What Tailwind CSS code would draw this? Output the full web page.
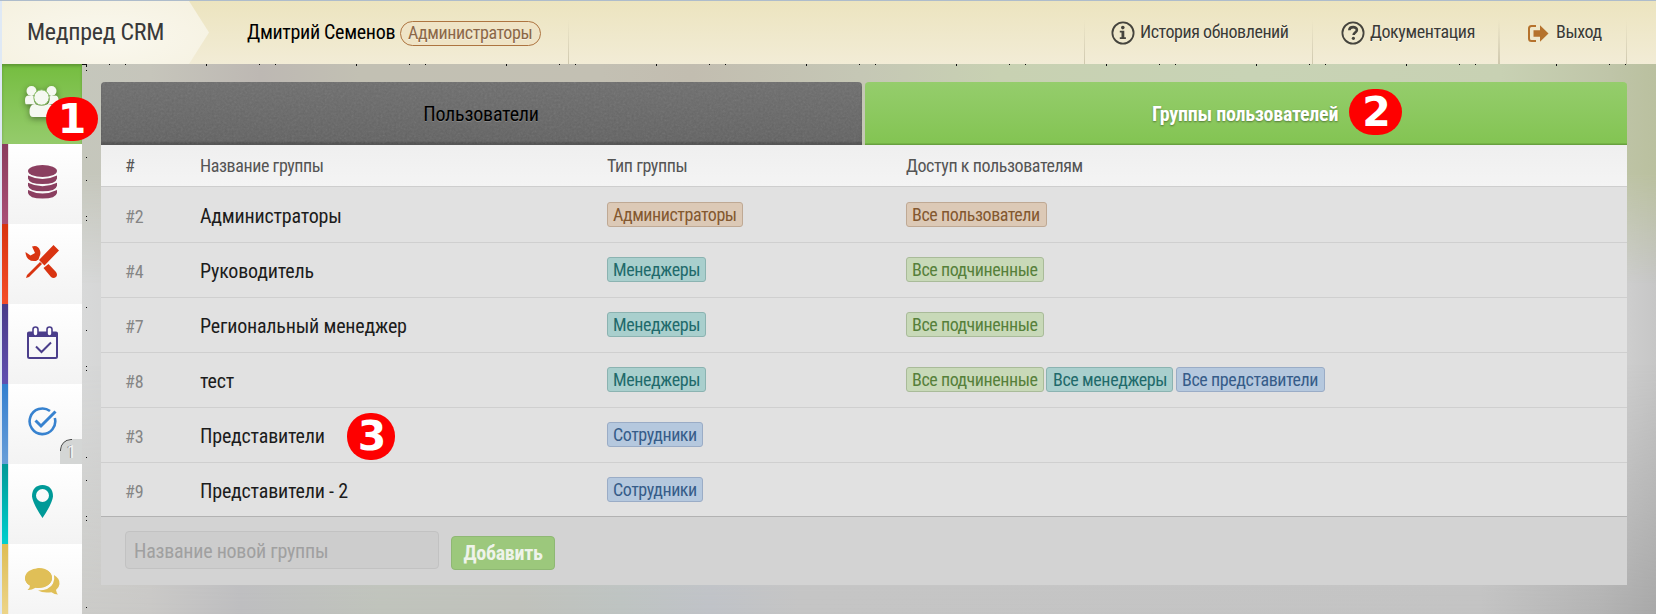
<!DOCTYPE html>
<html lang="ru">
<head>
<meta charset="utf-8">
<title>Медпред CRM</title>
<script src="https://cdn.jsdelivr.net/npm/@tailwindcss/browser@4"></script>
</head>
<body class="relative isolate h-[614px] w-[1656px] overflow-hidden bg-[#cfd0cf] font-['Roboto_Condensed',Roboto,sans-serif] text-[18px] text-black">

<!-- blurred backdrop -->
<div class="absolute inset-0 -z-10 bg-[linear-gradient(to_right,#d8d9d9_80px,#d0d0d0_160px,#cccccc_1540px,#cdcdcd_1630px,#c6c6c6_1656px)]"></div>
<div class="absolute inset-x-0 bottom-0 -z-10 h-[250px] bg-[linear-gradient(to_right,#cbcbc8_80px,#c9c8c6_150px,#bdbdbf_240px,#bfc3bb_380px,#bfc1bb_520px,#bdc3c1_620px,#bfc2c7_710px,#c4c4c4_800px,#c3c3c3_1480px,#b3b3b3_1600px,#a8a8a8_1656px)] [mask-image:linear-gradient(to_bottom,transparent,black)]"></div>
<div class="absolute inset-x-0 top-[64px] -z-10 h-[220px] bg-[linear-gradient(to_right,#c5c7bc_80px,#c6c5bb_150px,#bdb8b3_260px,#c2c0b3_360px,#c3c0b3_600px,#c2bdb0_690px,#c5c7b5_860px,#c8d1b2_1000px,#c8d3b5_1250px,#c8d1b3_1500px,#bfc5a8_1610px,#bac09f_1656px)] [mask-image:linear-gradient(to_bottom,black_20%,black_50%,transparent)]"></div>

<!-- header -->
<header class="flex h-[64px] border-t border-[#aebccb] bg-linear-to-b from-[#ece4bf] to-[#f2ecd6] text-[#3a3a35]">
  <div class="w-[2px] shrink-0 bg-[#dfe9f5]"></div>
  <div class="flex w-[207px] shrink-0 items-center bg-[radial-gradient(ellipse_at_50%_60%,#faf8ee,#f5f1e0)] pb-[2px] pl-[25px] text-[24px] tracking-[-0.3px] text-[#393939] [clip-path:polygon(0_0,187px_0,100%_50%,187px_100%,0_100%)]"><span class="whitespace-nowrap">Медпред CRM</span></div>
  <div class="flex items-center pl-[38px]">
    <span class="mb-[2px] w-[153px] whitespace-nowrap text-[20px] tracking-[-0.32px] text-black">Дмитрий Семенов</span>
    <span class="mt-[1px] flex h-[25px] w-[141px] items-center rounded-full border border-[#ad7440] bg-[#efe4c6] pb-px pl-[7px] tracking-[-0.4px] text-[#8b6747] text-shadow-[0_1px_0_#ffffff80]">Администраторы</span>
  </div>
  <div class="ml-[27px] w-px self-stretch bg-linear-to-b from-transparent from-30% to-[#cfc8ad]"></div>
  <nav class="ml-auto mr-[29px] flex items-center tracking-[-0.4px] text-shadow-[0_1px_0_#ffffffa0]">
    <span class="h-full w-px bg-linear-to-b from-transparent from-30% to-[#cfc8ad]"></span>
    <a class="flex h-full w-[227px] items-center pb-[2px] pl-[26px]">
      <svg class="mr-[5px] mt-[2px] size-[24px]" viewBox="0 0 24 24" fill="none" stroke="#45443d"><circle cx="12" cy="12" r="10.6" stroke-width="1.8"/><g fill="#45443d" stroke="none"><circle cx="11.8" cy="6.6" r="1.8"/><path d="M8.8 9.8h4.5v6.4h1.6v1.7H8.8v-1.7h1.7v-4.7H8.8z"/></g></svg>
      <span class="whitespace-nowrap tracking-[-0.45px]">История обновлений</span>
    </a>
    <span class="h-full w-px bg-linear-to-b from-transparent from-30% to-[#cfc8ad]"></span>
    <a class="flex h-full w-[185px] items-center pb-[2px] pl-[28px]">
      <svg class="mr-[5px] mt-[2px] size-[24px]" viewBox="0 0 24 24" fill="none" stroke="#45443d"><circle cx="12" cy="12" r="10.6" stroke-width="1.8"/><path d="M8.3 9.2c.2-4 7.6-4 7.6-.3 0 2.5-3.3 2.6-3.3 5" stroke-width="2.6"/><circle cx="12.4" cy="17.3" r="1.6" fill="#45443d" stroke="none"/></svg>
      <span class="whitespace-nowrap">Документация</span>
    </a>
    <span class="h-full w-[2px] bg-linear-to-b from-transparent from-30% to-[#cfc8ad]"></span>
    <a class="flex h-full w-[126px] items-center pb-[2px] pl-[28px]">
      <svg class="mr-[7px] mt-[3px] h-[17px] w-[21px]" viewBox="0 0 21 17"><path d="M8 1H3.5Q1 1 1 3.500v10Q1 16 3.500 16H8" fill="none" stroke="#b5722c" stroke-width="2"/><path d="M5.500 5.300h6.500V.3l8.500 8.200-8.500 8.200v-5H5.500z" fill="#b5722c"/></svg>
      <span>Выход</span>
    </a>
    <span class="h-full w-px bg-linear-to-b from-transparent from-30% to-[#cfc8ad]"></span>
  </nav>
</header>

<!-- speckles along the header and the sidebar -->
<div class="absolute inset-x-0 left-[82px] top-[64px] h-px bg-[repeating-linear-gradient(to_right,transparent_0_27px,#111_27px_28px,transparent_28px_43px,#111_43px_44px,transparent_44px_124px,#111_124px_125px,transparent_125px_150px)]"></div>
<div class="absolute inset-x-0 left-[82px] top-[65px] h-px bg-[repeating-linear-gradient(to_right,transparent_0_124px,#111_124px_125px,transparent_125px_150px)]"></div>
<div class="absolute left-[82px] top-[64px] h-[3px] w-[5px] border-r border-t border-[#111]"></div>
<div class="absolute bottom-0 left-[86px] top-[64px] w-px bg-[repeating-linear-gradient(to_bottom,transparent_0_2px,#111_2px_3px,transparent_3px_6px,#111_6px_7px,transparent_7px_93px,#111_93px_94px,transparent_94px_116px,#111_116px_117px,transparent_117px_150px)]"></div>

<div class="flex h-[550px]">
  <!-- sidebar -->
  <aside class="flex w-[82px] shrink-0 flex-col border-l-2 border-[#dfe9f5]">
    <a class="flex h-[80px] shrink-0 items-center justify-center bg-linear-to-b from-[#75bd3f] to-[#95cb6b] shadow-[inset_0_2px_3px_#0003]">
      <svg class="mb-[5px] h-[33px] w-[36px] drop-shadow-[0_2px_3px_#0006]" viewBox="0 0 36 33" fill="#f5f8f1"><circle cx="7.500" cy="6" r="5"/><circle cx="27.500" cy="6" r="5"/><path d="M1 15q0-4.500 3.500-4.500l6 .8q-1.500 5 1.500 8H2Q1 19 1 15zM34.500 15q0-4.500-3.500-4.500l-6 .8q1.500 5-1.500 8h10q1 0 1-4.300z"/><circle cx="17.500" cy="12.500" r="7.700" stroke="#7fb95a"/><path d="M5.500 27q0-8 5.500-8 6.500 3.500 13 0 5.800 0 5.800 8 0 5-3.300 5H9q-3.500 0-3.500-5z"/></svg>
    </a>
    <a class="flex h-[80px] shrink-0 bg-linear-to-b from-white to-[#f3f3f3]">
      <span class="w-[6px] bg-linear-to-b from-[#8a3d5e] to-[#a94f76]"></span><span class="w-px bg-[#e9e2e6]"></span>
      <span class="flex grow items-center justify-center"><svg class="mb-[5px] mr-[7px] h-[34px] w-[29px]" viewBox="0 0 29 34" fill="#8b3f60"><ellipse cx="14.500" cy="6" rx="14.500" ry="6"/><path d="M0 10.500q14.500 7 29 0v3Q28 19 14.500 19T0 13.500zM0 17.700q14.500 7 29 0v3q-1 5.500-14.500 5.500T0 20.700zM0 25q14.500 7 29 0v3q-1 5.500-14.500 5.500T0 28z"/></svg></span>
    </a>
    <a class="flex h-[80px] shrink-0 bg-linear-to-b from-white to-[#f3f3f3]">
      <span class="w-[6px] bg-linear-to-b from-[#d8330e] to-[#f44d28]"></span><span class="w-px bg-[#f0e4e2]"></span>
      <span class="flex grow items-center justify-center"><svg class="mb-[4px] mr-[7px] size-[34px]" viewBox="0 0 34 34" fill="#d93411"><path d="M28.500 0 34 5.500 19.500 20.500 14 15zM1 33l1-3 13-13 2 2L4 32zM18.500 23l5-4 7.500 8q2 3 0 5-2.500 2-5 0z"/><path d="M7 1.500Q13-.5 15 5.500q1 3-.5 6l-1 3-2.500 1.500Q1 17 .5 7l5 3.500L10 8z"/></svg></span>
    </a>
    <a class="flex h-[80px] shrink-0 bg-linear-to-b from-white to-[#f3f3f3]">
      <span class="w-[6px] bg-linear-to-b from-[#493c88] to-[#604fb0]"></span><span class="w-px bg-[#e5e3ec]"></span>
      <span class="flex grow items-center justify-center"><svg class="mb-[4px] mr-[7px] h-[33px] w-[31px]" viewBox="0 0 31 33"><path d="M2 5.500h27q2 0 2 2V11H0V7.500q0-2 2-2z" fill="#4b3e8b"/><rect x="1" y="7" width="29" height="25" rx="1.500" fill="none" stroke="#4b3e8b" stroke-width="2"/><rect x="6" y="1" width="5" height="9" rx="2.500" fill="#fff" stroke="#4b3e8b" stroke-width="1.600"/><rect x="20" y="1" width="5" height="9" rx="2.500" fill="#fff" stroke="#4b3e8b" stroke-width="1.600"/><path d="m9 20.500 5.500 5.500L24 16.500" fill="none" stroke="#4b3e8b" stroke-width="2"/></svg></span>
    </a>
    <a class="relative flex h-[80px] shrink-0 bg-linear-to-b from-white to-[#f3f3f3]">
      <span class="w-[6px] bg-linear-to-b from-[#327fcf] to-[#689ed8]"></span><span class="w-px bg-[#e2e9f0]"></span>
      <span class="flex grow items-center justify-center"><svg class="mb-[5px] mr-[7px] h-[29px] w-[29px]" viewBox="0 0 29 29" fill="none" stroke="#3782cf" stroke-width="2.600"><path d="M22 4A12.800 12.800 0 1 0 26.800 11"/><path d="m7.500 13.500 5.500 5.500L27.500 4.500" stroke-width="3"/></svg></span>
      <span class="absolute bottom-0 right-0 flex h-[25px] w-[22px] items-center justify-center overflow-hidden rounded-tl-[11px] bg-[#d4d6d5] pl-px text-[18px] text-[#f4f4f4] text-shadow-[-1px_0_0_#888]">
        <svg class="absolute left-0 top-0 size-[12px]" viewBox="0 0 12 12" fill="none" stroke="#444"><path d="M.5 12v-1A10.500 10.500 0 0 1 11 .5h1"/></svg>1</span>
    </a>
    <a class="flex h-[80px] shrink-0 bg-linear-to-b from-white to-[#f3f3f3]">
      <span class="w-[6px] bg-linear-to-b from-[#009997] to-[#00cfce]"></span><span class="w-px bg-[#e0ecec]"></span>
      <span class="flex grow items-center justify-center"><svg class="mb-[5px] mr-[7px] h-[33px] w-[21px]" viewBox="0 0 21 33" fill="#009a98"><path fill-rule="evenodd" d="M10.500 0Q21 .5 21 11.500 20 19 10.500 33 1 19 0 11.500 0 .5 10.500 0zm0 4a6.500 6.500 0 1 0 0 13 6.500 6.500 0 0 0 0-13z"/></svg></span>
    </a>
    <a class="flex h-[80px] shrink-0 bg-linear-to-b from-white to-[#f3f3f3]">
      <span class="w-[6px] bg-linear-to-b from-[#debd54] to-[#efd88f]"></span><span class="w-px bg-[#efece0]"></span>
      <span class="flex grow items-center justify-center"><svg class="mb-[5px] mr-[6px] h-[27px] w-[35px]" viewBox="0 0 35 27" fill="#e0bf57"><path d="M13.500 0C22 0 27 4.500 27 10s-5.500 10-13.500 10q-1.500 0-3-.3Q6 22.500 2.500 22q2.500-2 2.500-4.500Q0 14.500 0 10 0 4.500 13.500 0z"/><ellipse cx="13.500" cy="10" rx="13.500" ry="9.800"/><path d="M29 7q6 3.500 5.500 9-.3 3.500-3.500 6 .5 3 2 4.500-3.500 0-6.500-2.300Q18 25.500 13 22.500 25 22 28 15.500q2-4 1-8.500z"/></svg></span>
    </a>
  </aside>

  <!-- content -->
  <main class="ml-[19px] mt-[18px] w-[1526px] shrink-0">
    <div class="flex h-[63px] gap-[3px]">
      <div class="relative flex w-[761px] items-center justify-center overflow-hidden rounded-t-[4px] border-b border-[#565656] bg-linear-to-b from-[#6e6e6e] to-[#626262] pt-[2px] text-[20px] tracking-[-0.2px] text-black shadow-[inset_0_-2px_2px_#0003]">
        <svg class="absolute inset-0 size-full opacity-15"><filter id="grain"><feTurbulence type="fractalNoise" baseFrequency=".45" numOctaves="2"/><feColorMatrix type="saturate" values="0"/></filter><rect width="100%" height="100%" filter="url(#grain)"/></svg>
        <span class="relative mr-px text-shadow-[0_1px_0_#ffffff30]">Пользователи</span>
      </div>
      <div class="flex w-[762px] items-center rounded-t-[4px] border-b border-[#68a03f] bg-linear-to-b from-[#95cd6c] to-[#83c452] pl-[287px] pt-[2px] text-[20px] font-bold tracking-[-0.27px] text-white shadow-[inset_0_-1px_0_#76b348] text-shadow-[0_1px_2px_#0006]">Группы пользователей</div>
    </div>

    <div class="grid h-[42px] grid-cols-[75px_407px_299px_1fr] items-center border-b border-[#cecece] bg-linear-to-b from-[#efefef] to-[#f4f4f4] pl-[24px] tracking-[-0.42px] text-[#555]">
      <span>#</span><span>Название группы</span><span>Тип группы</span><span>Доступ к пользователям</span>
    </div>

    <div class="grid h-[56px] grid-cols-[75px_407px_299px_1fr] items-start border-b border-[#cfcfcf] bg-[#e1e1e1] pl-[24px] pt-[15px]">
      <span class="leading-[29px] text-[#858585]">#2</span><span class="text-[20px] leading-[28px] tracking-[-0.2px] text-[#1c1c1c]">Администраторы</span>
      <span class="flex"><b class="h-[25px] w-[136px] whitespace-nowrap rounded-[3px] border border-[#bfa994] bg-[#dcc9b6] pl-[5px] font-normal leading-[24px] tracking-[-0.45px] text-[#83582f]">Администраторы</b></span>
      <span class="flex"><b class="h-[25px] w-[141px] whitespace-nowrap rounded-[3px] border border-[#bfa994] bg-[#dcc9b6] pl-[5px] font-normal leading-[24px] tracking-[-0.45px] text-[#83582f]">Все пользователи</b></span>
    </div>
    <div class="grid h-[55px] grid-cols-[75px_407px_299px_1fr] items-start border-b border-[#cfcfcf] bg-[#e1e1e1] pl-[24px] pt-[14px]">
      <span class="leading-[29px] text-[#858585]">#4</span><span class="text-[20px] leading-[28px] tracking-[-0.2px] text-[#1c1c1c]">Руководитель</span>
      <span class="flex"><b class="h-[25px] w-[99px] whitespace-nowrap rounded-[3px] border border-[#8bb3b1] bg-[#a9cfcd] pl-[5px] font-normal leading-[24px] tracking-[-0.4px] text-[#1f6a6b]">Менеджеры</b></span>
      <span class="flex"><b class="h-[25px] w-[138px] whitespace-nowrap rounded-[3px] border border-[#a9bb99] bg-[#c8d9b8] pl-[5px] font-normal leading-[24px] tracking-[-0.45px] text-[#56803a]">Все подчиненные</b></span>
    </div>
    <div class="grid h-[55px] grid-cols-[75px_407px_299px_1fr] items-start border-b border-[#cfcfcf] bg-[#e1e1e1] pl-[24px] pt-[14px]">
      <span class="leading-[29px] text-[#858585]">#7</span><span class="text-[20px] leading-[28px] tracking-[-0.2px] text-[#1c1c1c]">Региональный менеджер</span>
      <span class="flex"><b class="h-[25px] w-[99px] whitespace-nowrap rounded-[3px] border border-[#8bb3b1] bg-[#a9cfcd] pl-[5px] font-normal leading-[24px] tracking-[-0.4px] text-[#1f6a6b]">Менеджеры</b></span>
      <span class="flex"><b class="h-[25px] w-[138px] whitespace-nowrap rounded-[3px] border border-[#a9bb99] bg-[#c8d9b8] pl-[5px] font-normal leading-[24px] tracking-[-0.45px] text-[#56803a]">Все подчиненные</b></span>
    </div>
    <div class="grid h-[55px] grid-cols-[75px_407px_299px_1fr] items-start border-b border-[#cfcfcf] bg-[#e1e1e1] pl-[24px] pt-[14px]">
      <span class="leading-[29px] text-[#858585]">#8</span><span class="text-[20px] leading-[28px] tracking-[-0.2px] text-[#1c1c1c]">тест</span>
      <span class="flex"><b class="h-[25px] w-[99px] whitespace-nowrap rounded-[3px] border border-[#8bb3b1] bg-[#a9cfcd] pl-[5px] font-normal leading-[24px] tracking-[-0.4px] text-[#1f6a6b]">Менеджеры</b></span>
      <span class="flex"><b class="mr-[2px] h-[25px] w-[138px] whitespace-nowrap rounded-[3px] border border-[#a9bb99] bg-[#c8d9b8] pl-[5px] font-normal leading-[24px] tracking-[-0.45px] text-[#56803a]">Все подчиненные</b><b class="mr-[3px] h-[25px] w-[127px] whitespace-nowrap rounded-[3px] border border-[#8bb3b1] bg-[#a9cfcd] pl-[6px] font-normal leading-[24px] tracking-[-0.4px] text-[#1f6a6b]">Все менеджеры</b><b class="h-[25px] w-[149px] whitespace-nowrap rounded-[3px] border border-[#9aacc6] bg-[#b5c8de] pl-[5px] font-normal leading-[24px] tracking-[-0.42px] text-[#365c89]">Все представители</b></span>
    </div>
    <div class="grid h-[55px] grid-cols-[75px_407px_299px_1fr] items-start border-b border-[#cfcfcf] bg-[#e1e1e1] pl-[24px] pt-[14px]">
      <span class="leading-[29px] text-[#858585]">#3</span><span class="text-[20px] leading-[28px] tracking-[-0.2px] text-[#1c1c1c]">Представители</span>
      <span class="flex"><b class="h-[25px] w-[96px] whitespace-nowrap rounded-[3px] border border-[#9aacc6] bg-[#b5c8de] pl-[5px] font-normal leading-[24px] tracking-[-0.45px] text-[#365c89]">Сотрудники</b></span>
    </div>
    <div class="grid h-[54px] grid-cols-[75px_407px_299px_1fr] items-start border-b border-[#b2b2b2] bg-[#e1e1e1] pl-[24px] pt-[14px]">
      <span class="leading-[29px] text-[#858585]">#9</span><span class="text-[20px] leading-[28px] tracking-[-0.2px] text-[#1c1c1c]">Представители - 2</span>
      <span class="flex"><b class="h-[25px] w-[96px] whitespace-nowrap rounded-[3px] border border-[#9aacc6] bg-[#b5c8de] pl-[5px] font-normal leading-[24px] tracking-[-0.45px] text-[#365c89]">Сотрудники</b></span>
    </div>

    <form class="flex h-[68px] items-start gap-[12px] bg-[#d3d3d3] pl-[24px] pt-[14px]">
      <input class="h-[38px] w-[314px] rounded-[4px] border border-[#c2c2c2] bg-[#cdcdcd] pl-[8px] pt-px text-[20px] tracking-[-0.25px] placeholder:text-[#a0a0a0]" placeholder="Название новой группы">
      <button type="button" class="mt-[5px] h-[34px] w-[104px] rounded-[4px] border border-[#8fb874] bg-[#9cc87c] text-[20px] font-bold tracking-[-0.3px] text-[#eef3ea]">Добавить</button>
    </form>
  </main>
</div>

<!-- numbered callouts -->
<div class="absolute left-[46px] top-[97px] flex h-[44px] w-[52px] items-center justify-center rounded-[24px/22px] bg-[#fe0000] font-['DejaVu_Sans',sans-serif] text-[41px] font-bold leading-none text-white">1</div>
<div class="absolute left-[1349px] top-[89px] flex h-[46px] w-[53px] items-center justify-center rounded-[24px/23px] bg-[#fe0000] pl-[2px] pt-px font-['DejaVu_Sans',sans-serif] text-[41px] font-bold leading-none text-white">2</div>
<div class="absolute left-[347px] top-[413px] flex h-[47px] w-[48px] items-center justify-center rounded-[23px] bg-[#fe0000] pl-[2px] font-['DejaVu_Sans',sans-serif] text-[41px] font-bold leading-none text-white">3</div>
</body>
</html>
